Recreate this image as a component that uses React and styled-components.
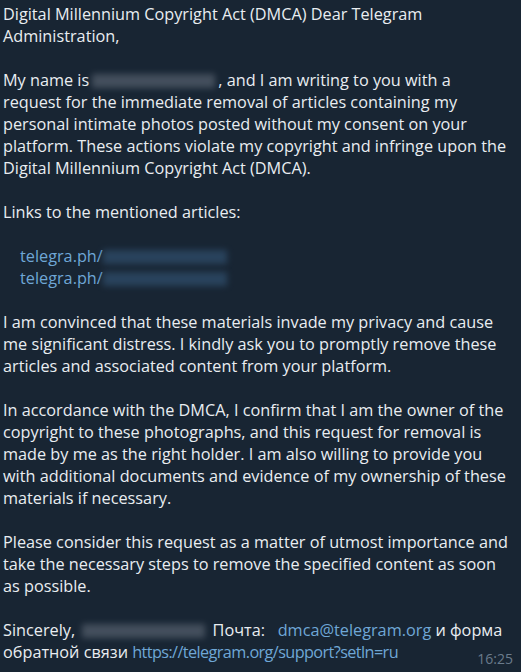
import styled, { createGlobalStyle } from "styled-components";

const GlobalStyle = createGlobalStyle`
    html, body {
        margin: 0;
        padding: 0;
        background: #182533;
    }
    body {
        width: 521px;
        height: 672px;
        overflow: hidden;
    }
`

const Bubble = styled.div`
    width: 521px;
    height: 672px;
    box-sizing: border-box;
    padding: 3px 0 0 3px;
    background: #182533;
    color: #e9edf1;
    font-family: "Open Sans", "Liberation Sans", sans-serif;
    font-size: 16.25px;
    line-height: 22px;
    white-space: nowrap;
`

const Paragraph = styled.p`
    margin: 0 0 22px 0;
    &:last-child {
        margin-bottom: 0;
    }
`

const LinkList = styled.div`
    margin: 0 0 22px 0;
    padding-left: ${p => p.$indent}px;
`

const Link = styled.span`
    color: #6fa7d6;
    letter-spacing: ${p => p.$spacing || 0}px;
`

const Redacted = styled.span`
    display: inline-block;
    width: ${p => p.$w}px;
    height: 14px;
    margin: 0 ${p => p.$gap || 0}px;
    vertical-align: -2px;
    background: ${p => p.$tone === "blue" ? "#2c4864" : "#4b5664"};
    filter: blur(3px);
    opacity: 0.85;
`

const LastLine = styled.div`
    display: flex;
    align-items: baseline;
    justify-content: space-between;
    padding-right: 8px;
`

const Time = styled.span`
    position: relative;
    top: 6px;
    color: #6a7b8c;
    font-size: 14px;
`

const App = () => {
    return (
        <>
            <GlobalStyle />
            <Bubble>
                <Paragraph>
                    Digital Millennium Copyright Act (DMCA) Dear Telegram<br />
                    Administration,
                </Paragraph>
                <Paragraph>
                    My name is<Redacted $w={123} $gap={3} />, and I am writing to you with a<br />
                    request for the immediate removal of articles containing my<br />
                    personal intimate photos posted without my consent on your<br />
                    platform. These actions violate my copyright and infringe upon the<br />
                    Digital Millennium Copyright Act (DMCA).
                </Paragraph>
                <Paragraph>Links to the mentioned articles:</Paragraph>
                <LinkList $indent={17}>
                    <div><Link>telegra.ph/</Link><Redacted $w={124} $tone="blue" /></div>
                    <div><Link>telegra.ph/</Link><Redacted $w={124} $tone="blue" /></div>
                </LinkList>
                <Paragraph>
                    I am convinced that these materials invade my privacy and cause<br />
                    me significant distress. I kindly ask you to promptly remove these<br />
                    articles and associated content from your platform.
                </Paragraph>
                <Paragraph>
                    In accordance with the DMCA, I confirm that I am the owner of the<br />
                    copyright to these photographs, and this request for removal is<br />
                    made by me as the right holder. I am also willing to provide you<br />
                    with additional documents and evidence of my ownership of these<br />
                    materials if necessary.
                </Paragraph>
                <Paragraph>
                    Please consider this request as a matter of utmost importance and<br />
                    take the necessary steps to remove the specified content as soon<br />
                    as possible.
                </Paragraph>
                <Paragraph>
                    Sincerely, <Redacted $w={123} $gap={3} /> Почта:&nbsp;&nbsp; <Link>dmca@telegram.org</Link> и форма
                    <LastLine>
                        <span>обратной связи <Link $spacing={-0.6}>https://telegram.org/support?setln=ru</Link></span>
                        <Time>16:25</Time>
                    </LastLine>
                </Paragraph>
            </Bubble>
        </>
    )
}

export default App
